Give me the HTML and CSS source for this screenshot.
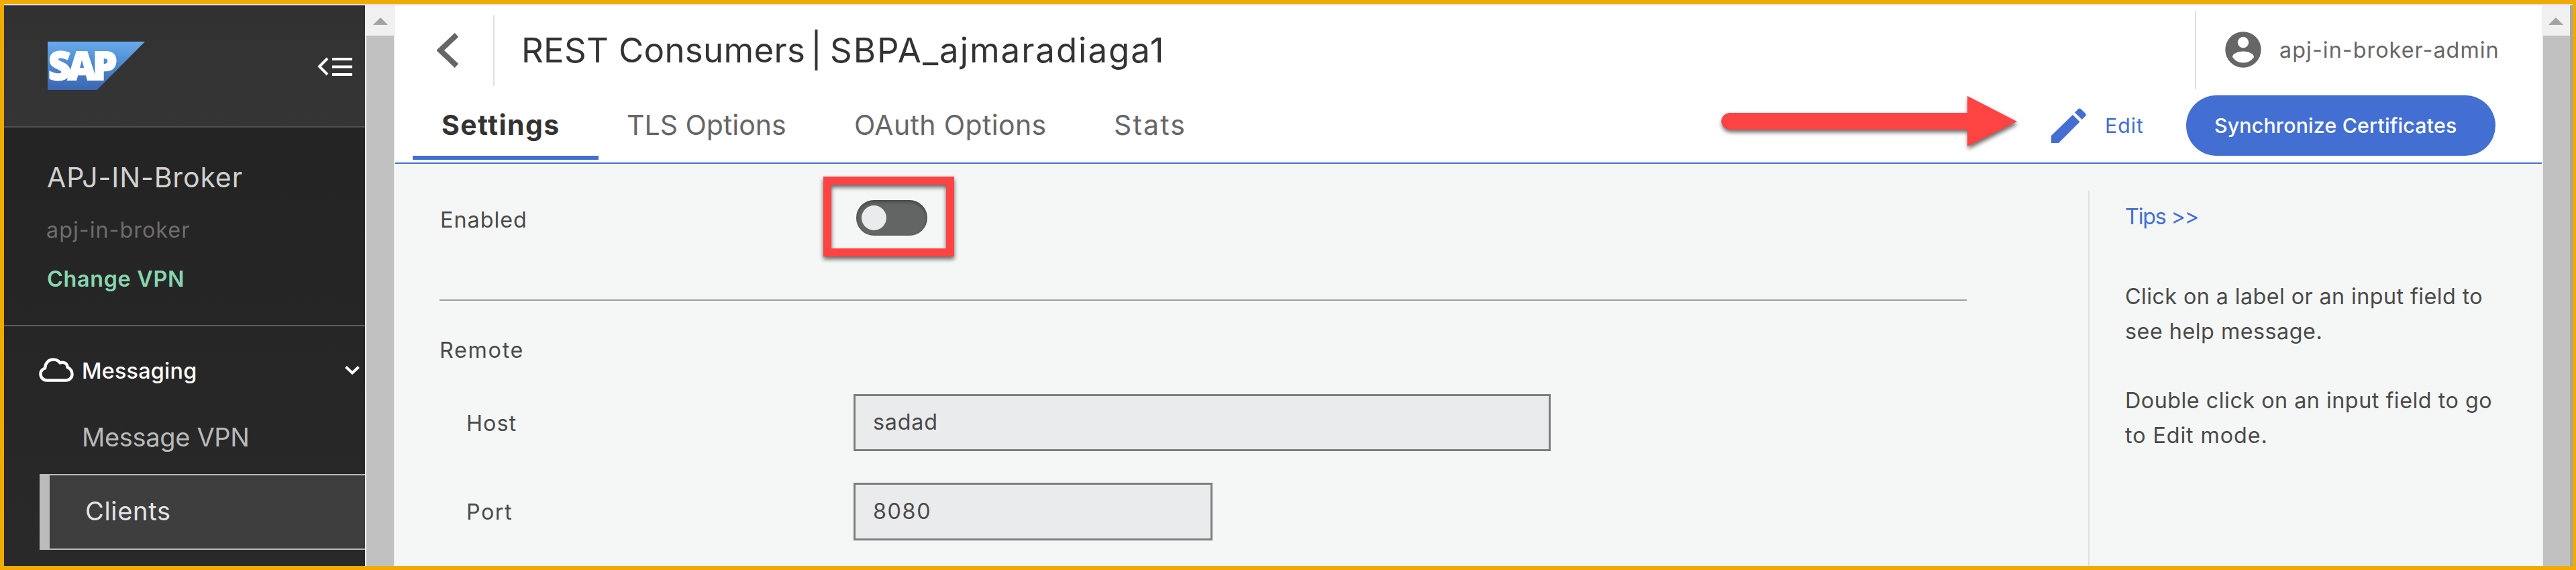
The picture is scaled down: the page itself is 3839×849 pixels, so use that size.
FILE: index.html
```html
<!DOCTYPE html>
<html lang="en">
<head>
<meta charset="utf-8">
<title>REST Consumers</title>
<link rel="stylesheet" href="styles.css">
</head>
<body>
<div class="window">
  <aside class="sidebar">
    <div class="brand">
      <svg class="logo" viewBox="0 0 145 72">
        <defs>
          <linearGradient id="sap" x1="0" y1="0" x2="0" y2="1">
            <stop offset="0" stop-color="#68abec"/>
            <stop offset="0.5" stop-color="#4c87cd"/>
            <stop offset="1" stop-color="#3c66b2"/>
          </linearGradient>
        </defs>
        <path d="M0 0H145L73.500 72H0Z" fill="url(#sap)"/>
        <text class="logo-text" x="1 30 67" y="57">SAP</text>
      </svg>
      <svg class="collapse" viewBox="0 0 53 28">
        <path d="M15 2L3 14L15 26" fill="none" stroke="#fff" stroke-width="4"/>
        <path d="M22 3H52M22 14.500H52M22 26H52" stroke="#fff" stroke-width="4"/>
      </svg>
    </div>
    <div class="broker">
      <div class="broker-name">APJ-IN-Broker</div>
      <div class="broker-id">apj-in-broker</div>
      <a class="broker-change">Change VPN</a>
    </div>
    <nav class="nav">
      <div class="nav-group">
        <svg class="cloud" viewBox="0 0 52 36">
          <path d="M12 33.500C6 33.500 2.500 29 2.500 24C2.500 19.500 5 17 9 15.500C9.500 7.500 14.500 2.500 21.500 2.500C26 2.500 29.500 4.500 31.500 7.500C37.500 5 42.500 9 42.500 14C47 16 49.500 19.500 49.500 24.500C49.500 29.500 45.500 33.500 40 33.500Z" fill="none" stroke="#fff" stroke-width="4.500" stroke-linejoin="round"/>
        </svg>
        <span class="nav-title">Messaging</span>
        <svg class="caret" viewBox="0 0 22 14"><path d="M1.500 1.500L11 10.500L20.500 1.500" fill="none" stroke="#fff" stroke-width="4"/></svg>
      </div>
      <div class="nav-item">Message VPN</div>
      <div class="nav-item nav-item-active">Clients</div>
    </nav>
  </aside>
  <div class="scroll scroll-left">
    <svg class="scroll-arrow" viewBox="0 0 22 11"><path d="M0 11L11 0L22 11Z" fill="#a3a3a3"/></svg>
    <div class="thumb"></div>
  </div>
  <main class="main">
    <header class="head">
      <div class="title-row">
        <svg class="back" viewBox="0 0 33 52"><path d="M29.500 3L5 26L29.500 49" fill="none" stroke="#666" stroke-width="8"/></svg>
        <div class="title-rule"></div>
        <h1 class="title"><span class="title-kind">REST Consumers</span><span class="title-bar">|</span><span class="title-name">SBPA_ajmaradiaga1</span></h1>
        <div class="user">
          <svg class="avatar" viewBox="0 0 54 54">
            <circle cx="27" cy="27" r="26.700" fill="#666"/>
            <circle cx="27" cy="16.300" r="8.200" fill="#fff"/>
            <path d="M11 38C11 32.500 20 29.500 27 29.500S43 32.500 43 38C39.500 43 34 46.500 27 46.500S14.500 43 11 38Z" fill="#fff"/>
          </svg>
          <span class="user-name">apj-in-broker-admin</span>
        </div>
      </div>
      <div class="tab-row">
        <div class="tab tab-active">Settings</div>
        <div class="tab tab-tls">TLS Options</div>
        <div class="tab tab-oauth">OAuth Options</div>
        <div class="tab tab-stats">Stats</div>
        <div class="actions">
          <svg class="pencil" viewBox="0 0 52 52" fill="#446fd2">
            <path d="M0 41L32 10L42.500 20.500L11 52H0Z"/>
            <path d="M35 6.500L40 1.500Q42 -.7 44.300 1.500L50.500 7.500Q53 10 50.500 12.300L45.700 17Z"/>
          </svg>
          <span class="edit">Edit</span>
          <button class="sync">Synchronize Certificates</button>
        </div>
      </div>
    </header>
    <div class="content">
      <section class="form">
        <div class="enabled-row">
          <div class="label">Enabled</div>
          <div class="toggle"><div class="knob"></div></div>
        </div>
        <hr class="rule">
        <div class="section-name">Remote</div>
        <div class="field-row host-row">
          <div class="label label-sub label-host">Host</div>
          <div class="input input-host">sadad</div>
        </div>
        <div class="field-row port-row">
          <div class="label label-sub label-port">Port</div>
          <div class="input input-port">8080</div>
        </div>
      </section>
      <aside class="tips">
        <a class="tips-link">Tips &gt;&gt;</a>
        <p class="tip"><span class="tip-first">Click on a label or an input field to</span><br><span>see help message.</span></p>
        <p class="tip"><span>Double click on an input field to go</span><br><span class="tip-last">to Edit mode.</span></p>
      </aside>
    </div>
  </main>
  <div class="scroll scroll-right">
    <svg class="scroll-arrow" viewBox="0 0 22 11"><path d="M0 11L11 0L22 11Z" fill="#a3a3a3"/></svg>
    <div class="thumb"></div>
  </div>
  <div class="highlight"></div>
  <svg class="arrow" viewBox="0 0 450 90">
    <path d="M12 28H367V3L441 41L367 78V53H12Q1 51 0 40.500Q1 30 12 28Z" fill="#fe4343"/>
  </svg>
</div>
</body>
</html>
```
FILE: styles.css
```css
* { box-sizing: border-box; }
body {
  margin: 0;
  background: #f0ab00;
  font-family: Inter, Roboto, "Liberation Sans", sans-serif;
  font-size: 32.3px;
  color: #4a4a4a;
}
.window {
  position: relative;
  display: flex;
  width: 3839px;
  height: 849px;
  overflow: hidden;
  border: 6px solid #f0ab00;
  border-right-width: 5px;
  padding: 2px 4px 0 0;
  background: linear-gradient(#e1e1e1 0 2px, transparent 2px), #a5a5a5;
  background-clip: padding-box;
  white-space: nowrap;
}
svg { display: block; flex: none; }

/* Sidebar */
.sidebar {
  flex: none;
  width: 538px;
  background: linear-gradient(#222, #292929);
}
.brand {
  display: flex;
  height: 182px;
  padding: 54px 0 0 65px;
  border-bottom: 2px solid #4f4f4f;
  background: linear-gradient(#313131, #353535);
}
.logo { width: 145px; height: 72px; overflow: visible; }
.logo-text {
  font-family: "Open Sans", Inter, sans-serif;
  font-weight: 800;
  font-size: 58px;
  fill: #fff;
  stroke: #fff;
  stroke-width: 2px;
}
.collapse { width: 53px; height: 28px; margin: 23px 0 0 257px; }
.broker {
  display: flex;
  flex-direction: column;
  height: 296px;
  padding: 49px 0 0 64px;
  border-bottom: 2px solid #5c5c5c;
}
.broker-name { font-size: 41px; line-height: 50px; color: #d0d0d0; letter-spacing: .87px; }
.broker-id { margin: 34px 0 0 -1px; line-height: 40px; color: #6d6d6d; letter-spacing: 1.02px; }
.broker-change { margin-top: 33px; line-height: 40px; font-weight: 600; color: #88d6b0; letter-spacing: .7px; }
.nav { padding-top: 46px; }
.nav-group { display: flex; height: 40px; padding-left: 52px; }
.cloud { width: 52px; height: 36px; margin-top: 1px; }
.nav-title { width: 392px; margin-left: 12px; line-height: 41px; font-weight: 500; color: #fff; letter-spacing: .25px; }
.caret { width: 22px; height: 14px; margin-top: 13px; }
.nav-item { margin-top: 54px; padding-left: 116px; font-size: 38px; line-height: 50px; color: #b9b9b9; letter-spacing: -.33px; }
.nav-item-active {
  height: 113px;
  margin: 30px 0 0 53px;
  padding-left: 53px;
  border: 2px solid #bbb;
  border-left-width: 15px;
  border-right: 0;
  background: #3e3e3e;
  color: #e4e4e4;
  line-height: 107px;
  letter-spacing: .7px;
}

/* Scrollbars */
.scroll { display: flex; flex-direction: column; align-items: center; flex: none; padding-top: 18px; background: #f0f0f0; }
.scroll-left { width: 45px; }
.scroll-right { width: 42px; }
.scroll-arrow { width: 22px; height: 11px; }
.thumb { flex: 1; width: 41px; margin-top: 16px; background: #c1c1c1; }
.scroll-right .thumb { width: 40px; margin-left: 2px; }

/* Header */
.main { display: flex; flex-direction: column; width: 3199px; flex: none; background: #f5f7f6; }
.head { height: 236px; flex: none; border-bottom: 2px solid #446fd2; background: #fff; }
.title-row { display: flex; align-items: center; height: 134px; padding-left: 62px; }
.back { width: 33px; height: 52px; }
.title-rule { width: 2px; height: 106px; margin-left: 51px; background: #e1e1e1; }
.title { display: flex; width: 2494px; margin: 0 0 1px 40px; font-size: 51px; font-weight: 400; line-height: 64px; color: #333; }
.title-kind { width: 431px; letter-spacing: .3px; }
.title-bar { width: 29px; }
.title-name { letter-spacing: 1.95px; }
.user { display: flex; align-items: center; height: 117px; margin-bottom: 2px; padding-left: 43px; border-left: 2px solid #e1e1e1; }
.avatar { width: 54px; height: 54px; }
.user-name { margin: 2px 0 0 27px; line-height: 40px; color: #666; letter-spacing: 1.05px; }
.tab-row { display: flex; height: 96px; padding-left: 26px; font-size: 41px; line-height: 88px; color: #666; }
.tab { flex: none; height: 96px; }
.tab-active { width: 277px; padding-left: 43px; border-bottom: 6px solid #446fd2; font-weight: 700; color: #333; letter-spacing: 1.4px; }
.tab-tls { width: 339px; padding-left: 42px; }
.tab-oauth { width: 386px; padding-left: 42px; letter-spacing: .36px; }
.tab-stats { width: 1440px; padding-left: 43px; letter-spacing: 2.1px; }
.actions { display: flex; align-items: center; height: 90px; font-size: 30.3px; color: #446fd2; }
.pencil { width: 52px; height: 52px; }
.edit { width: 121px; margin-left: 28px; letter-spacing: .97px; }
.sync {
  width: 461px;
  height: 90px;
  padding: 0 0 0 42px;
  border: 0;
  border-radius: 45px;
  background: #446fd2;
  color: #fff;
  font: 500 30.3px/90px Inter, Roboto, sans-serif;
  letter-spacing: .18px;
  text-align: left;
}

/* Settings form */
.content { display: flex; flex: 1; min-height: 0; }
.form { width: 2523px; padding-left: 66px; }
.enabled-row { display: flex; align-items: center; height: 160px; }
.label { width: 619px; line-height: 40px; padding-left: 1px; letter-spacing: 1.01px; }
.enabled-row .label { width: 621px; margin-top: 7px; }
.toggle { width: 106px; height: 53px; padding: 8px; border-radius: 26.5px; background: #636564; box-shadow: inset 0 3px 5px rgba(0,0,0,.3); }
.knob { width: 37px; height: 37px; border-radius: 50%; background: #eaebed; }
.rule { width: 2276px; height: 2px; margin: 42px 0 0; border: 0; background: #9d9f9e; }
.section-name { margin-top: 54px; line-height: 40px; letter-spacing: 1.71px; }
.field-row { display: flex; align-items: center; }
.host-row { margin-top: 45px; }
.port-row { margin-top: 47px; }
.label-sub { width: 617px; padding: 2px 0 0 40px; }
.label-port { letter-spacing: 1.52px; }
.input { height: 85px; padding-left: 26px; border: 3px solid #7d7e7d; background: #eaebed; line-height: 78px; }
.input-host { width: 1039px; letter-spacing: .8px; }
.input-port { width: 535px; height: 86px; line-height: 80px; letter-spacing: 1.6px; }

/* Tips */
.tips { width: 676px; height: 559px; margin-top: 40px; padding: 19px 0 0 53px; border-left: 2px solid #dfe1e0; }
.tips-link { display: block; line-height: 40px; color: #446fd2; letter-spacing: -1.2px; }
.tip { margin: 0 0 51.5px; line-height: 51.8px; letter-spacing: .5px; }
.tips-link + .tip { margin-top: 73px; }
.tip-first { letter-spacing: .41px; }
.tip-last { letter-spacing: .9px; }

/* Annotations over the page */
.highlight {
  position: absolute;
  left: 1221px;
  top: 257px;
  width: 195px;
  height: 119px;
  border: 12px solid #fe4343;
  filter: drop-shadow(0 4px 3px rgba(0,0,0,.6));
}
.arrow {
  position: absolute;
  left: 2559px;
  top: 134px;
  width: 450px;
  height: 90px;
  filter: drop-shadow(1px 4px 3px rgba(0,0,0,.6));
}
```
